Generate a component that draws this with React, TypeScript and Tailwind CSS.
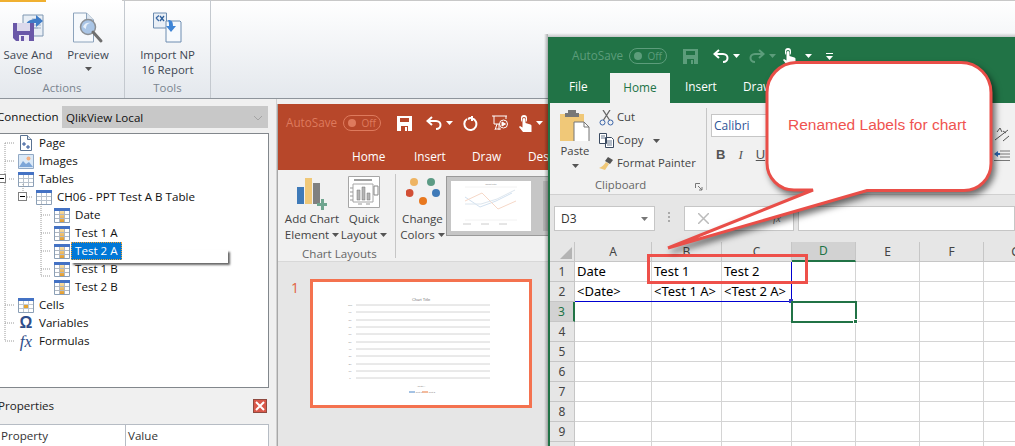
import React from "react";

const Caret = ({ c = "#555", className = "" }: { c?: string; className?: string }) => (
  <svg width="7" height="4" viewBox="0 0 7 4" className={`shrink-0 ${className}`}><path d="M0 0h7L3.500 4z" fill={c} /></svg>
);

const SaveCloseIcon = () => (
  <svg width="33" height="30" viewBox="0 0 33 30">
    <path d="M11 1h20v21H11z" fill="#e8eef5" stroke="#7f97b2" />
    <path d="M20 5h9M20 8h9M20 11h9M20 14h9M14 14h12" stroke="#9db0c6" />
    <path d="M13 13c1-6 6-8 11-8V1l7 6-7 6V9c-5 0-8 1-11 4z" fill="#3f7cc7" />
    <path d="M1 9h21v18H4l-3-3z" fill="#6a58a8" />
    <path d="M5 9h13v8H5z" fill="#dcd9ec" />
    <path d="M7 21h10v6H7z" fill="#ece9f5" /><path d="M9 22h3v5H9z" fill="#6a58a8" />
  </svg>
);
const PreviewIcon = () => (
  <svg width="32" height="32" viewBox="0 0 32 32">
    <path d="M1.500 1h13l7 7v22h-20z" fill="#f6f9fc" stroke="#8ca3bc" />
    <path d="M14.500 1v7h7" fill="#dbe4ee" stroke="#8ca3bc" />
    <circle cx="16" cy="15" r="7.500" fill="#a9c5e6" stroke="#8b8f94" strokeWidth="1.500" />
    <path d="M11 15c1-4 5-5 8-4-3 0-5 2-5 6z" fill="#e7f0fa" />
    <path d="M21 20l8 9" stroke="#6f6f6f" strokeWidth="3" strokeLinecap="round" />
  </svg>
);
const ImportIcon = () => (
  <svg width="32" height="32" viewBox="0 0 32 32">
    <path d="M1.500 1h13v15h-13z" fill="#e9eff6" stroke="#6d8cb0" />
    <path d="M4 6l3-2.500M4 6l3 3" stroke="#3c6aa5" strokeWidth="1.300" fill="none" />
    <path d="M8 4l4 5M12 4L8 9" stroke="#2f5f9b" strokeWidth="1.300" />
    <path d="M14 9h14l1 1v20H14z" fill="#f7fafd" stroke="#6d8cb0" />
    <path d="M16 8c4 0 5 2 5 6h3l-5 6-5-6h3c0-2 0-4-1-6z" fill="#3f85d6" />
  </svg>
);

const PageIcon = () => (
  <svg width="16" height="16" viewBox="0 0 16 16">
    <path d="M2.500.5h7l4 4v11h-11z" fill="#fff" stroke="#5a7393" />
    <path d="M9.500.5v4h4" fill="#dde6f0" stroke="#5a7393" />
    <path d="M6 7v4M4 9h4M10 10v4M8 12h4" stroke="#2f5597" />
  </svg>
);
const ImagesIcon = () => (
  <svg width="16" height="15" viewBox="0 0 16 15">
    <path d="M.5.5h15v14H.5z" fill="#dbe9f7" stroke="#92a9c4" />
    <circle cx="10.500" cy="4.500" r="2" fill="#f4b183" />
    <path d="M1 13l4-6 3 3 3-2 4 5z" fill="#7da6d8" />
  </svg>
);
const TableIcon = () => (
  <svg width="16" height="15" viewBox="0 0 16 15">
    <path d="M.5.5h15v14H.5z" fill="#fff" stroke="#8b9fb6" />
    <path d="M0 0h16v3H0z" fill="#4472c4" />
    <path d="M5.500 3v11M10.500 3v11M1 6.500h14M1 10.500h14" stroke="#b8c2cd" />
  </svg>
);
const LeafIcon = () => (
  <svg width="16" height="15" viewBox="0 0 16 15">
    <defs><linearGradient id="lg" x1="0" x2="0" y1="0" y2="1"><stop offset="0" stopColor="#f8dfa8" /><stop offset="1" stopColor="#e29b2c" /></linearGradient></defs>
    <path d="M.5.5h15v14H.5z" fill="#fff" stroke="#8b9fb6" />
    <path d="M0 0h16v3H0z" fill="#4472c4" />
    <path d="M6 3h5v11H6z" fill="url(#lg)" />
    <path d="M5.500 3v11M10.500 3v11M1 6.500h14M1 10.500h14" stroke="#b0b8c2" />
  </svg>
);
const CellsIcon = () => (
  <svg width="16" height="15" viewBox="0 0 16 15">
    <path d="M.5.500h15v14H.5z" fill="#fff" stroke="#8b9fb6" />
    <path d="M0 0h16v3H0z" fill="#4472c4" />
    <path d="M5.500 3v11M10.500 3v11M1 6.500h14M1 10.500h14" stroke="#c0c8d0" />
    <path d="M6 7h4v3H6z" fill="#e8a530" />
  </svg>
);
const TreeGlyph = ({ ch, italic = false }: { ch: string; italic?: boolean }) => (
  <span className={`w-[16px] text-center text-[#2f4d8a] leading-none ${italic ? "italic font-['Liberation_Serif',serif] text-[17px]" : "font-bold font-['Liberation_Sans',sans-serif] text-[16px]"}`}>{ch}</span>
);

const Row = ({ indent, icon, label, selected }: { indent: number; icon: React.ReactNode; label: string; selected?: boolean }) => (
  <div className="flex h-[18px] items-center text-[11.600px] text-[#111]" style={{ paddingLeft: indent }}>
    <span className="flex w-[16px] shrink-0 justify-center">{icon}</span>
    {selected ? (
      <span className="relative ml-[1px] flex h-[18px] items-center">
        <span className="absolute left-0 top-[8px] h-[13px] w-[157px] bg-white shadow-[2px_2px_2px_#666]" />
        <span className="relative flex h-[18px] items-center border border-dotted border-[#f0a030] bg-[#0078d7] px-[3px] text-white">{label}</span>
      </span>
    ) : (
      <span className="relative ml-[5px]">{label}</span>
    )}
  </div>
);

const TreeLines = () => (
  <svg className="absolute left-0 top-0" width="100" height="220" viewBox="0 0 100 220" fill="none" stroke="#9a9a9a" strokeDasharray="1 1">
    <path d="M5 9v197M5 9h10M5 27h10M9 45h6M5 171h10M5 189h10M5 207h10" />
    <path d="M23 50v13M27 63h6" />
    <path d="M41 70v72M41 81h10M41 99h10M41 117h10M41 135h10M41 142h10" />
  </svg>
);

const ExpandBox = ({ className = "" }: { className?: string }) => (
  <span className={`absolute flex h-[9px] w-[9px] items-center justify-center border border-[#808080] bg-white ${className}`}>
    <span className="h-[1px] w-[5px] bg-black" />
  </span>
);

const LeftPanel = () => (
  <div className="flex h-[347px] w-[277px] flex-col border-r border-[#d0d0d0] bg-[#f0f0f0]">
    <div className="ml-[-3px] mt-[7px] flex h-[22px] items-center gap-[2px] text-[11.600px] text-[#111]">
      <span className="w-[63px] whitespace-nowrap">Connection</span>
      <div className="flex h-[22px] w-[206px] items-center justify-between bg-[#c8c8c8] pl-[4px] pr-[5px] pt-[1px]">
        <span>QlikView Local</span>
        <svg width="10" height="6" viewBox="0 0 10 6" fill="none" stroke="#a4a4a4"><path d="M1 1l4 4 4-4" /></svg>
      </div>
    </div>
    <div className="relative ml-[-1px] mt-[5px] h-[256px] w-[270px] border border-[#82878c] bg-white">
      <TreeLines />
      <ExpandBox className="left-[-3px] top-[40px]" />
      <ExpandBox className="left-[18px] top-[58px]" />
      <Row indent={18} icon={<PageIcon />} label="Page" />
      <Row indent={18} icon={<ImagesIcon />} label="Images" />
      <Row indent={18} icon={<TableIcon />} label="Tables" />
      <Row indent={36} icon={<TableIcon />} label="CH06 - PPT Test A B Table" />
      <Row indent={54} icon={<LeafIcon />} label="Date" />
      <Row indent={54} icon={<LeafIcon />} label="Test 1 A" />
      <Row indent={54} icon={<LeafIcon />} label="Test 2 A" selected />
      <Row indent={54} icon={<LeafIcon />} label="Test 1 B" />
      <Row indent={54} icon={<LeafIcon />} label="Test 2 B" />
      <Row indent={18} icon={<CellsIcon />} label="Cells" />
      <Row indent={18} icon={<TreeGlyph ch="Ω" />} label="Variables" />
      <Row indent={18} icon={<TreeGlyph ch="fx" italic />} label="Formulas" />
    </div>
    <div className="ml-[-2px] flex h-[36px] w-[270px] items-center justify-between pr-[1px] text-[11.600px] text-[#222]">
      <span>Properties</span>
      <span className="flex h-[14px] w-[14px] items-center justify-center border border-[#8f4a40] bg-[#d9584a]">
        <svg width="10" height="10" viewBox="0 0 10 10" stroke="#fff" strokeWidth="2"><path d="M1 1l8 8M9 1l-8 8" /></svg>
      </span>
    </div>
    <div className="ml-[-1px] flex h-[22px] w-[270px] border border-b-0 border-[#b6bcc4] bg-white text-[11.600px] text-[#333]">
      <span className="w-[126px] border-r border-[#b6bcc4] pl-[1px] pt-[2px]">Property</span>
      <span className="pl-[2px] pt-[2px]">Value</span>
    </div>
  </div>
);

const RibbonBtn = ({ icon, label, caret, w }: { icon: React.ReactNode; label: React.ReactNode; caret?: boolean; w: string }) => (
  <div className={`flex flex-col items-center text-center text-[11.400px] leading-[15px] text-[#3d4652] ${w}`}>
    <div className="flex h-[32px] items-end justify-center">{icon}</div>
    <div className="mt-[3px] whitespace-nowrap">{label}</div>
    {caret && <Caret c="#555" className="mt-[5px]" />}
  </div>
);

const TopRibbon = () => (
  <div className="relative h-[99px] border-b border-[#8e949b] bg-gradient-to-b from-[#ffffff] to-[#e4e8ed]">
    <div className="absolute left-0 top-0 h-[2px] w-[46px] bg-[#f0b030]" />
    <div className="absolute left-[122px] top-0 h-[2px] w-[900px] border-t border-[#c8c8c8] bg-white" />
    <div className="flex h-full">
      <div className="relative flex w-[125px] border-r border-[#c4c9cf] pt-[12px]">
        <RibbonBtn w="w-[56px]" icon={<SaveCloseIcon />} label={<>Save And<br />Close</>} />
        <RibbonBtn w="w-[64px]" icon={<PreviewIcon />} label="Preview" caret />
        <span className="absolute bottom-[2px] left-0 w-full text-center text-[11.400px] text-[#7b8590]">Actions</span>
      </div>
      <div className="relative flex w-[86px] justify-center border-r border-[#c4c9cf] pt-[12px]">
        <RibbonBtn w="w-[80px]" icon={<ImportIcon />} label={<>Import NP<br />16 Report</>} />
        <span className="absolute bottom-[2px] left-0 w-full text-center text-[11.400px] text-[#7b8590]">Tools</span>
      </div>
    </div>
  </div>
);

const Toggle = ({ c, dot }: { c: string; dot: string }) => (
  <span className="flex h-[16px] w-[38px] shrink-0 items-center justify-between rounded-full border px-[4px] text-[10px]" style={{ borderColor: c, color: c }}>
    <span className="h-[8px] w-[8px] rounded-full" style={{ background: dot }} />
    <span>Off</span>
  </span>
);
const SaveGlyph = ({ c, bg }: { c: string; bg: string }) => (
  <svg width="15" height="15" viewBox="0 0 15 15" className="block"><path d="M0 0h15v15H0z" fill={c} /><path d="M3 2h9v4H3z" fill={bg} /><path d="M4 10h7v5H4z" fill={bg} /><path d="M8 11h2v4H8z" fill={c} /></svg>
);
const UndoGlyph = ({ c, flip }: { c: string; flip?: boolean }) => (
  <svg width="16" height="14" viewBox="0 0 16 14" fill="none" stroke={c} strokeWidth="2" className={`block ${flip ? "-scale-x-100" : ""}`}>
    <path d="M6 1L1.500 5 6 9M2 5h8c3 0 4.500 2 4.500 4S13 13 10 13" />
  </svg>
);
const TouchGlyph = ({ c }: { c: string }) => (
  <svg width="14" height="17" viewBox="0 0 14 17" fill={c} className="block">
    <path d="M3 3a3 3 0 0 1 6 0v2a3 3 0 0 1-1 2V4a2 2 0 0 0-4 0v3a3 3 0 0 1-1-2z" />
    <path d="M4.500 4.500a1.500 1.500 0 0 1 3 0V8l5 1.500c1 .5 1 1 1 2V17H5l-4-5 1-1 2.500 1.500z" />
  </svg>
);

const ThumbChart = () => (
  <svg width="80" height="50" viewBox="0 0 80 50" className="block shrink-0 bg-white">
    <text x="40" y="4" textAnchor="middle" fontSize="2.500" fill="#888" fontFamily="Liberation Sans">Chart Title</text>
    <path d="M14 16l15 10 16-6 16-8" stroke="#d2e1f0" fill="none" />
    <path d="M14 20l17-8 16 16 18-8" stroke="#f6d8c8" fill="none" />
    <path d="M14 23h16l16-5 18-9" stroke="#dde6ee" fill="none" />
    <path d="M14 6h52M14 39h52" stroke="#f2f2f2" />
    <path d="M12 43h8M30 43h8M48 43h8" stroke="#ccc" />
  </svg>
);

const PptWindow = () => (
  <div className="absolute left-[277px] top-[104px] flex h-[342px] w-[272px] flex-col overflow-hidden border-l border-[#a8a8a8] bg-[#e6e6e6]">
    <div className="flex h-[66px] shrink-0 flex-col bg-[#b7472a]">
      <div className="flex h-[36px] items-center pt-[2px] text-white">
        <span className="ml-[8px] w-[57px] shrink-0 text-[11.700px] text-[#de7a5d]">AutoSave</span>
        <Toggle c="#de7a5d" dot="#de7a5d" />
        <span className="ml-[16px]"><SaveGlyph c="#fff" bg="#b7472a" /></span>
        <span className="ml-[14px]"><UndoGlyph c="#fff" /></span>
        <Caret c="#fff" className="ml-[4px]" />
        <span className="ml-[10px]">
          <svg width="15" height="15" viewBox="0 0 15 15" fill="none" stroke="#fff" strokeWidth="2" className="block"><path d="M9 2.200A6 6 0 1 1 4 3M9 0v5M9 1L5 3" /></svg>
        </span>
        <span className="ml-[14px]">
          <svg width="18" height="17" viewBox="0 0 18 17" fill="none" stroke="#fff" className="block"><path d="M0 1h15M2 1v8h5M14 1v3" /><circle cx="11.500" cy="9" r="4" /><path d="M10 7l3.500 2-3.500 2z" fill="#fff" /><path d="M5 9l-2 6M7 9v6M4 14h5" /></svg>
        </span>
        <span className="ml-[8px]"><TouchGlyph c="#fff" /></span>
        <Caret c="#fff" className="ml-[4px]" />
      </div>
      <div className="flex flex-1 items-center pl-[74px] pt-[3px] text-[11.800px] text-white">
        <span className="w-[62px] shrink-0">Home</span><span className="w-[58px] shrink-0">Insert</span><span className="w-[56px] shrink-0">Draw</span><span className="shrink-0">Design</span>
      </div>
    </div>
    <div className="flex h-[92px] shrink-0 border-b border-[#d8d8d8] bg-[#f1f1f1] text-[11.600px] leading-[16px] text-[#444]">
      <div className="relative flex w-[117px] shrink-0 pl-[4px]">
        <div className="flex w-[60px] shrink-0 flex-col items-center">
          <svg width="30" height="32" viewBox="0 0 30 32" className="mt-[8px]">
            <path d="M0 9h7v17H0z" fill="#3f7ab8" /><path d="M8 0h7v26H8z" fill="#f0c878" /><path d="M16 5h7v21h-7z" fill="#808080" />
            <path d="M20 25h4v-4h3v4h4v3h-4v4h-3v-4h-4z" fill="#6fa58f" />
          </svg>
          <div className="mt-[1px] whitespace-nowrap text-center">Add Chart</div>
          <div className="flex items-center gap-[3px]">Element <Caret /></div>
        </div>
        <div className="flex w-[44px] shrink-0 flex-col items-center">
          <svg width="32" height="32" viewBox="0 0 32 32" className="mt-[6px]">
            <path d="M.5.5h31v31H.5z" fill="#fff" stroke="#a6a6a6" />
            <path d="M6 4h18" stroke="#a0a0a0" strokeWidth="2" />
            <path d="M5 8h20v18H5z" fill="#fff" stroke="#a6a6a6" />
            <path d="M9 14h3v10H9zM14 11h3v13h-3zM19 17h3v7h-3z" fill="#b5b5b5" stroke="#777" strokeWidth=".5" />
            <path d="M26 10h4v9h-4z" fill="#fff" stroke="#888" /><path d="M2 12h3M2 16h3M2 20h3M2 24h3M10 28h4M18 28h4" stroke="#999" />
          </svg>
          <div className="mt-[3px]">Quick</div>
          <div className="flex items-center gap-[3px]">Layout <Caret /></div>
        </div>
        <span className="absolute bottom-[-1px] left-[24px] whitespace-nowrap text-[#666]">Chart Layouts</span>
      </div>
      <div className="my-[4px] h-[84px] w-[1px] shrink-0 bg-[#c6c6c6]" />
      <div className="ml-[3px] flex w-[47px] shrink-0 flex-col items-center">
        <svg width="34" height="28" viewBox="0 0 34 28" className="mt-[8px] shrink-0">
          <circle cx="8" cy="4" r="4" fill="#eeb463" /><circle cx="25" cy="4" r="4" fill="#5c9b85" /><circle cx="3.500" cy="15" r="4" fill="#d24f35" /><circle cx="30" cy="15" r="4" fill="#3f7ab8" /><circle cx="17" cy="23" r="4" fill="#e8781f" />
        </svg>
        <div className="mt-[5px]">Change</div>
        <div className="flex items-center gap-[3px]">Colors <Caret /></div>
      </div>
      <div className="mt-[6px] h-[60px] w-[120px] shrink-0 border border-r-0 border-[#9a9a9a]">
        <div className="flex h-full bg-[#c6c6c6] p-[4px]">
          <ThumbChart />
          <div className="ml-[12px] h-full w-[6px] shrink-0 bg-[#b0b0b0]" />
        </div>
      </div>
    </div>
    <div className="flex flex-1 items-start pl-[13px] pt-[17px]">
      <span className="w-[19px] shrink-0 text-[14px] leading-[18px] text-[#e1613e]">1</span>
      <div className="h-[129px] w-[222px] shrink-0 border-[3px] border-[#f4724f] bg-white">
        <svg width="216" height="123" viewBox="0 0 216 123" className="block">
          <text x="108" y="19" textAnchor="middle" fontSize="4" fill="#777" fontFamily="Liberation Sans">Chart Title</text>
          {[23, 30, 38, 45, 52, 60, 67, 74, 82, 89, 96].map((y, i) => (
            <g key={y}>
              <path d={`M43 ${y}H177`} stroke="#d4d4d4" />
              <text x="37" y={y + 1} textAnchor="middle" fontSize="2.500" fill="#888" fontFamily="Liberation Sans">{i === 10 ? "0" : 100 - i * 10}</text>
            </g>
          ))}
          <text x="108" y="105" textAnchor="middle" fontSize="2.500" fill="#888" fontFamily="Liberation Sans">&lt;Date&gt;</text>
          <path d="M96 110h6" stroke="#4a86c8" /><path d="M109 110h6" stroke="#e8773c" />
          <text x="102.500" y="111" fontSize="2.500" fill="#888" fontFamily="Liberation Sans">Test 1</text>
          <text x="115.500" y="111" fontSize="2.500" fill="#888" fontFamily="Liberation Sans">Test 2</text>
        </svg>
      </div>
    </div>
  </div>
);

const COLS = ["A", "B", "C", "D", "E", "F", "G"];
const CELLS: Record<string, string> = {
  A1: "Date", B1: "Test 1", C1: "Test 2",
  A2: "<Date>", B2: "<Test 1 A>", C2: "<Test 2 A>",
};

const Sheet = () => (
  <div className="relative grid grid-cols-[25px_77px_70px_70px_64px_64px_64px_64px] grid-rows-[repeat(11,20px)] font-['Noto_Sans',sans-serif]">
    <div className="relative border-b border-r border-[#c6c6c6] bg-[#e6e6e6]">
      <svg width="12" height="12" viewBox="0 0 12 12" className="absolute bottom-[2px] right-[2px]"><path d="M12 0v12H0z" fill="#b4b4b4" /></svg>
    </div>
    {COLS.map((c) => (
      <div key={c} className={`flex items-center justify-center border-r text-[12px] ${c === "D" ? "border-b-2 border-b-[#217346] border-r-[#c6c6c6] bg-[#d2d2d2] text-[#217346]" : "border-b border-[#c6c6c6] bg-[#e6e6e6] text-[#444]"}`}>{c}</div>
    ))}
    {[1, 2, 3, 4, 5, 6, 7, 8, 9, 10].map((r) => (
      <React.Fragment key={r}>
        <div className={`flex items-center justify-center border-b border-[#c6c6c6] text-[12px] ${r === 3 ? "border-r-2 border-r-[#217346] bg-[#d2d2d2] text-[#217346]" : "border-r bg-[#e6e6e6] text-[#444]"}`}>{r}</div>
        {COLS.map((c) => (
          <div key={c} className="flex items-center overflow-visible whitespace-nowrap border-b border-r border-[#d4d4d4] bg-white pl-[2px] text-[13px] text-black">{CELLS[c + r]}</div>
        ))}
      </React.Fragment>
    ))}
    <div className="absolute left-[25px] top-[20px] h-[40px] w-[217px] border-b border-r border-[#0000d0]">
      <span className="absolute bottom-[-2px] right-[-2px] h-[4px] w-[4px] bg-[#3a3ac0]" />
    </div>
    <div className="absolute left-[241px] top-[59px] h-[22px] w-[66px] border-2 border-[#217346]">
      <span className="absolute bottom-[-3px] right-[-3px] h-[5px] w-[5px] border border-white bg-[#217346]" />
    </div>
  </div>
);

const ExcelWindow = () => (
  <div className="absolute left-[548px] top-[37px] flex h-[409px] w-[467px] flex-col overflow-hidden border-l-2 border-[#217346] bg-[#e6e6e6] font-['Open_Sans',sans-serif]">
    <div className="flex h-[66px] shrink-0 flex-col bg-[#217346]">
      <div className="flex h-[36px] items-center pt-[2px]">
        <span className="ml-[22px] w-[57px] shrink-0 text-[11.700px] text-[#5c9d7b]">AutoSave</span>
        <Toggle c="#5c9d7b" dot="#5c9d7b" />
        <span className="ml-[16px]"><SaveGlyph c="#5c9d7b" bg="#217346" /></span>
        <span className="ml-[15px]"><UndoGlyph c="#fff" /></span>
        <Caret c="#fff" className="ml-[4px]" />
        <span className="ml-[9px]"><UndoGlyph c="#5c9d7b" flip /></span>
        <Caret c="#5c9d7b" className="ml-[4px]" />
        <span className="ml-[6px]"><TouchGlyph c="#fff" /></span>
        <Caret c="#fff" className="ml-[9px]" />
        <svg width="7" height="7" viewBox="0 0 7 7" className="ml-[14px]"><path d="M0 0h7v1H0zM0 3h7L3.500 7z" fill="#fff" /></svg>
      </div>
      <div className="flex flex-1 items-end text-[11.800px] text-white">
        <span className="w-[60px] shrink-0 pb-[7px] pl-[19px]">File</span>
        <span className="flex h-[30px] w-[60px] shrink-0 items-center justify-center bg-[#f1f1f1] text-[#217346]">Home</span>
        <span className="w-[58px] shrink-0 pb-[7px] pl-[15px]">Insert</span>
        <span className="pb-[7px] pl-[15px]">Draw</span>
      </div>
    </div>
    <div className="flex h-[92px] shrink-0 border-b border-[#d0d0d0] bg-[#f1f1f1] text-[11.300px] text-[#444]">
      <div className="relative flex w-[156px] shrink-0">
        <div className="ml-[9px] flex w-[32px] shrink-0 flex-col items-center">
          <svg width="30" height="31" viewBox="0 0 30 31" className="mt-[7px]">
            <path d="M0 4h24v27H0z" fill="#f0c878" />
            <path d="M8 0h8v3h3v4H5V3h3z" fill="#777" />
            <path d="M14 12h10l5 5v15H14z" fill="#fff" stroke="#777" />
            <path d="M24 12v5h5" fill="none" stroke="#777" />
          </svg>
          <span className="mt-[2px] leading-[16px]">Paste</span>
          <Caret className="mt-[5px]" />
        </div>
        <div className="ml-[8px] flex flex-col pt-[3px]">
          <div className="flex h-[23px] items-center gap-[3px]">
            <svg width="15" height="16" viewBox="0 0 15 16" fill="none" stroke="#3a64a8"><circle cx="3.500" cy="12.500" r="2.500" /><circle cx="11.500" cy="12.500" r="2.500" /><path d="M4.500 10L11 0M10.500 10L4 0" stroke="#666" strokeWidth="1.300" /></svg>
            Cut
          </div>
          <div className="flex h-[23px] items-center gap-[3px]">
            <svg width="15" height="15" viewBox="0 0 15 15" fill="#fff" stroke="#3a4a60"><path d="M.5.500h7v10h-7zM6.500 4.500h6l2 2v8h-8z" /><path d="M2 3h4M2 5h4M8 8h5M8 10h5M8 12h5" stroke="#6a7a90" /></svg>
            Copy <Caret className="ml-[7px]" />
          </div>
          <div className="flex h-[23px] items-center gap-[3px] whitespace-nowrap">
            <svg width="15" height="15" viewBox="0 0 15 15"><path d="M9 1l5 3-3 4-5-3z" fill="#555" /><path d="M7 6l3 2-4 6-6-2c3-1 5-3 7-6z" fill="#f0c878" /></svg>
            Format Painter
          </div>
        </div>
        <span className="absolute bottom-[0px] left-[45px] text-[#666]">Clipboard</span>
        <svg width="8" height="8" viewBox="0 0 8 8" fill="none" stroke="#777" className="absolute bottom-[3px] right-[3px]"><path d="M.5 5V.5H5M3 3l4 4M7 4v3H4" /></svg>
      </div>
      <div className="my-[5px] h-[82px] w-[1px] shrink-0 bg-[#c6c6c6]" />
      <div className="ml-[4px] flex flex-1 flex-col">
        <div className="mt-[11px] h-[23px] w-[120px] border border-[#c6c6c6] bg-white pl-[2px] text-[12px] leading-[21px] text-[#2f5597]">Calibri</div>
        <div className="mt-[8px] flex gap-[13px] pl-[5px] font-['Liberation_Sans',sans-serif] text-[13px] text-[#555]">
          <b>B</b><i className="font-['Liberation_Serif',serif]">I</i><u>U</u>
        </div>
      </div>
      <div className="relative w-[20px] shrink-0">
        <svg width="16" height="16" viewBox="0 0 16 16" className="absolute left-[-1px] top-[23px]" fill="none" stroke="#555"><path d="M1 14L14 4M9 15l6-5" /><path d="M3 6l3-4 2 4M9 5l3 2" /></svg>
        <svg width="16" height="12" viewBox="0 0 16 12" className="absolute left-[-1px] top-[47px]"><path d="M6 1h10M6 4h10M6 7h10M0 10.500h16" stroke="#777" /><path d="M0 4l4-3v2h2v2H4v2z" fill="#2f6cb5" /></svg>
      </div>
    </div>
    <div className="flex h-[47px] shrink-0 items-start bg-[#e6e6e6] pt-[11px]">
      <div className="ml-[4px] flex h-[25px] w-[101px] shrink-0 items-center justify-between border border-[#c6c6c6] bg-white px-[6px] text-[12px] text-[#333]">
        D3 <Caret c="#777" />
      </div>
      <div className="ml-[13px] mt-[6px] flex shrink-0 flex-col gap-[2px]">
        <span className="h-[2px] w-[2px] bg-[#aaa]" /><span className="h-[2px] w-[2px] bg-[#aaa]" /><span className="h-[2px] w-[2px] bg-[#aaa]" />
      </div>
      <div className="ml-[14px] flex h-[25px] w-[110px] shrink-0 items-center justify-between border border-[#c6c6c6] bg-white pl-[13px] pr-[12px] text-[#777]">
        <svg width="11" height="11" viewBox="0 0 11 11" stroke="#bbb" strokeWidth="1.500"><path d="M0 0l11 11M11 0L0 11" /></svg>
        <span className="font-['Liberation_Serif',serif] text-[11px] italic">fx</span>
      </div>
      <div className="ml-[4px] h-[25px] flex-1 border border-[#c6c6c6] bg-white" />
    </div>
    <Sheet />
  </div>
);

const Callout = () => (
  <div className="absolute left-[660px] top-[58px] h-[200px] w-[340px]">
    <svg width="340" height="200" viewBox="0 0 340 200" className="absolute inset-0 drop-shadow-[3px_4px_3px_rgba(0,0,0,0.55)]">
      <path d="M136 4.500h165a30 30 0 0 1 30 30v71a27 27 0 0 1-27 27H207L8 190l145-58h-19a27 27 0 0 1-27-27V34.500a30 30 0 0 1 29-30z" fill="#fff" stroke="#e94e48" strokeWidth="3" strokeLinejoin="miter" />
    </svg>
    <span className="absolute left-[128px] top-[56px] whitespace-nowrap font-['Liberation_Sans',sans-serif] text-[15.500px] leading-[22px] text-[#ef5350]">Renamed Labels for chart</span>
  </div>
);

export default function App() {
  return (
    <div className="relative h-[446px] w-[1015px] overflow-hidden bg-[#f0f0f0] font-['Open_Sans',sans-serif]">
      <TopRibbon />
      <LeftPanel />
      <PptWindow />
      <div className="absolute left-[544px] top-[34px] h-[412px] w-[4px] bg-gradient-to-r from-transparent to-black/30" />
      <div className="absolute left-[548px] top-[33px] h-[4px] w-[467px] bg-gradient-to-b from-transparent to-black/20" />
      <ExcelWindow />
      <div className="absolute left-[647px] top-[254px] h-[30px] w-[161px] border-[3px] border-[#ee504a]" />
      <Callout />
    </div>
  );
}
